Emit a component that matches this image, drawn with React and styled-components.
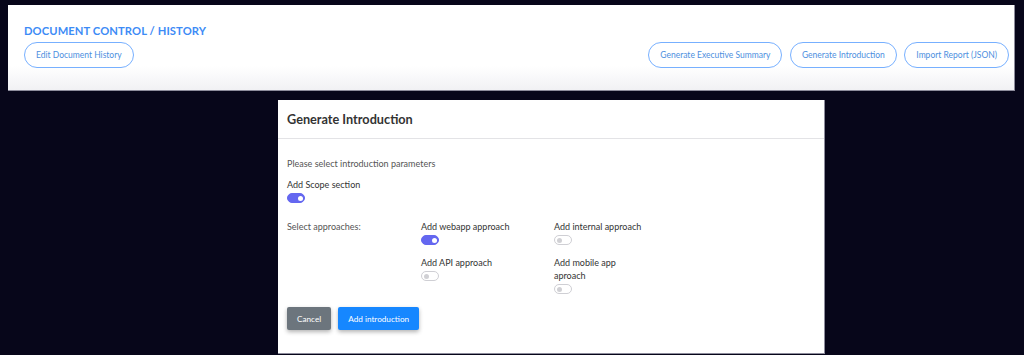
import React from "react";
import styled, { createGlobalStyle } from "styled-components";

const Global = createGlobalStyle`
  html, body { margin: 0; padding: 0; background: #07061a; }
  body { font-family: Lato, "Open Sans", sans-serif; height: 355px; overflow: hidden; }
  * { box-sizing: border-box; }
`;

const Page = styled.div`
  padding: 5px 9px 0 8px;
`;

const TopPanel = styled.div`
  height: 86px;
  background: linear-gradient(#ffffff 0%, #ffffff 72%, #f1f1f4 100%);
  border-right: 1px solid #8d8c9c;
  border-bottom: 1px solid #8d8c9c;
  padding: 19px 5px 0 16px;
`;

const PanelTitle = styled.h1`
  margin: 0;
  font-size: 11.2px;
  font-weight: 700;
  color: #3d8bf6;
  letter-spacing: 0.1px;
  line-height: 13px;
`;

const ToolRow = styled.div`
  display: flex;
  align-items: center;
  gap: 7.5px;
  margin-top: 4.5px;
`;

const Spacer = styled.div`
  flex: 1;
`;

const Pill = styled.button`
  height: 26px;
  padding: 0 11px;
  border: 1.5px solid #77b0ff;
  border-radius: 13px;
  background: #fff;
  color: #4d8fe0;
  font-family: inherit;
  font-size: 8.5px;
  white-space: nowrap;
`;

const Modal = styled.div`
  width: 547px;
  height: 254px;
  margin: 9px 0 0 270px;
  background: #fff;
  border-right: 1px solid #8d8c9c;
  border-bottom: 1px solid #8d8c9c;
`;

const ModalHeader = styled.div`
  height: 39px;
  padding: 0 9px;
  display: flex;
  align-items: center;
  border-bottom: 1px solid #e3e3e6;
`;

const ModalTitle = styled.h2`
  margin: 0;
  font-size: 12.7px;
  font-weight: 700;
  color: #333;
`;

const ModalBody = styled.div`
  padding: 18px 9px 0 9px;
  color: #444;
  font-size: 9px;
`;

const Intro = styled.p`
  margin: 0;
  line-height: 13px;
  color: #555;
`;

const Label = styled.div`
  line-height: 13px;
  color: #333;
`;

const Field = styled.div`
  display: flex;
  flex-direction: column;
`;

const ScopeField = styled(Field)`
  margin-top: 8px;
`;

const SwitchTrack = styled.span`
  display: inline-block;
  position: relative;
  width: 18px;
  height: 10px;
  border-radius: 5px;
  margin-top: 2px;
  background: ${(p) => (p.on ? "#6467f0" : "#fff")};
  border: 1px solid ${(p) => (p.on ? "#6467f0" : "#cfcfd4")};
`;

const SwitchKnob = styled.span`
  position: absolute;
  top: 1.5px;
  left: ${(p) => (p.on ? "9.5px" : "1.5px")};
  width: 5px;
  height: 5px;
  border-radius: 50%;
  background: ${(p) => (p.on ? "#fff" : "#d0d0d4")};
`;

const Approaches = styled.div`
  display: grid;
  grid-template-columns: 134px 133px 94px;
  row-gap: 11px;
  margin-top: 17px;
`;

const LabelCell = styled.div`
  grid-row: span 2;
  line-height: 13px;
  color: #555;
`;

const Actions = styled.div`
  display: flex;
  gap: 7px;
  margin-top: 13px;
`;

const ActionButton = styled.button`
  height: 23px;
  padding: 0 10px;
  border: none;
  border-radius: 2px;
  font-family: inherit;
  font-size: 8.2px;
  color: #fff;
  background: ${(p) => (p.primary ? "#1687ff" : "#6c757d")};
  box-shadow: 0 2px 4px rgba(0, 0, 0, 0.3);
`;

const Switch = ({ on }) => (
  <SwitchTrack on={on ? 1 : 0}>
    <SwitchKnob on={on ? 1 : 0} />
  </SwitchTrack>
);

export default function App() {
  return (
    <>
      <Global />
      <Page>
        <TopPanel>
          <PanelTitle>DOCUMENT CONTROL / HISTORY</PanelTitle>
          <ToolRow>
            <Pill>Edit Document History</Pill>
            <Spacer />
            <Pill>Generate Executive Summary</Pill>
            <Pill>Generate Introduction</Pill>
            <Pill>Import Report (JSON)</Pill>
          </ToolRow>
        </TopPanel>
        <Modal>
          <ModalHeader>
            <ModalTitle>Generate Introduction</ModalTitle>
          </ModalHeader>
          <ModalBody>
            <Intro>Please select introduction parameters</Intro>
            <ScopeField>
              <Label>Add Scope section</Label>
              <Switch on />
            </ScopeField>
            <Approaches>
              <LabelCell>Select approaches:</LabelCell>
              <Field>
                <Label>Add webapp approach</Label>
                <Switch on />
              </Field>
              <Field>
                <Label>Add internal approach</Label>
                <Switch />
              </Field>
              <Field>
                <Label>Add API approach</Label>
                <Switch />
              </Field>
              <Field>
                <Label>Add mobile app aproach</Label>
                <Switch />
              </Field>
            </Approaches>
            <Actions>
              <ActionButton>Cancel</ActionButton>
              <ActionButton primary>Add introduction</ActionButton>
            </Actions>
          </ModalBody>
        </Modal>
      </Page>
    </>
  );
}
